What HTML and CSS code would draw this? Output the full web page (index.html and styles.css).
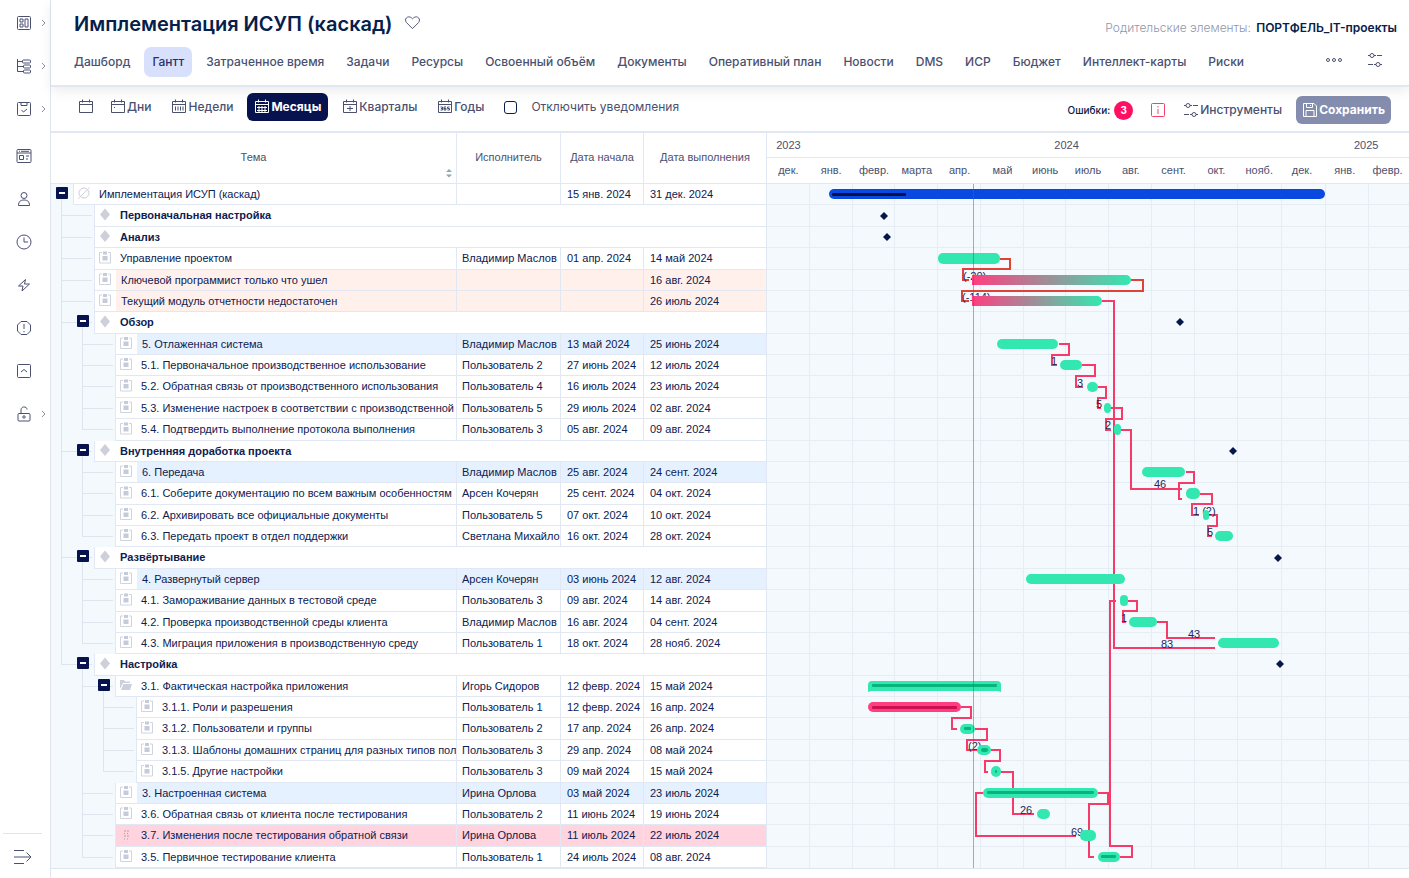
FILE: index.html
```html
<!DOCTYPE html>
<html lang="ru">
<head>
<meta charset="utf-8">
<title>Имплементация ИСУП (каскад)</title>
<link rel="stylesheet" href="styles.css">
</head>
<body>
<svg class="defs" aria-hidden="true">
  <symbol id="chev" viewBox="0 0 6 8"><path d="M1 1l3 3-3 3"/></symbol>
  <symbol id="task" viewBox="0 0 14 14"><path d="M4 2H1.500v10.500h11V2H10" fill="none" stroke="#d0d4e0"/><path d="M5 1h4v3H5zM4.500 5.500h5v4.500h-5z" fill="#c6cbda"/></symbol>
  <symbol id="rhomb" viewBox="0 0 14 14"><path d="M7 1l5 6-5 6-5-6z" fill="#cdd0db"/></symbol>
  <symbol id="none" viewBox="0 0 14 14"><g fill="none" stroke="#cdd0db"><circle cx="7" cy="7" r="5"/><path d="M1.500 12.500l11-11"/></g></symbol>
  <symbol id="folder" viewBox="0 0 14 14"><path d="M1 2h4l1 1.500h5V5H4l-2.500 5H1zM4.500 6H13l-2 6H2z" fill="#cbcfdd"/></symbol>
  <symbol id="drag" viewBox="0 0 14 14"><path d="M5 3h2v1H5zM8 3h2v1H8zM5 5.500h1v1H5zM8 5.500h1v1H8zM5 8h2v1H5zM8 8h2v1H8zM5 11h1v1H5zM8 11h1v1H8z" fill="#b99aae"/></symbol>
  <symbol id="cal" viewBox="0 0 16 16"><path d="M2 2.500h12.500v11h-13v-11zM1.500 5.500h13M4.500 .5v3M11.500 .5v3"/></symbol>
  <symbol id="sliders" viewBox="0 0 16 16"><path d="M1 3.500h2M7 3.500h2M10 3.500h5M1 12.500h5M7 12.500h2M13 12.500h2"/><circle cx="5" cy="3.500" r="2"/><circle cx="11" cy="12.500" r="2"/></symbol>
</svg>

<nav class="side" aria-label="Разделы">
  <a href="#" aria-label="Дашборд"><svg viewBox="0 0 16 16"><rect x="1.500" y="1.500" width="13" height="13" rx="1"/><path d="M4 4h3v3H4zM4 9h3v3H4zM9 4h3v8H9z"/></svg><svg class="chev"><use href="#chev"/></svg></a>
  <a href="#" aria-label="Структура"><svg viewBox="0 0 16 16"><path d="M1.500 1v12.500H7M1.500 3.500H6M1.500 8.500H7"/><rect x="6.500" y="2" width="8" height="3" rx="1"/><rect x="7.500" y="7" width="7" height="3" rx="1"/><rect x="7.500" y="12" width="7" height="3" rx="1"/></svg><svg class="chev"><use href="#chev"/></svg></a>
  <a href="#" aria-label="Задачи"><svg viewBox="0 0 16 16"><rect x="1.500" y="1.500" width="13" height="13" rx="1"/><path d="M5 1.500v3h6v-3M5.500 9l2 2 3.500-3"/></svg><svg class="chev"><use href="#chev"/></svg></a>
  <a href="#" aria-label="Порталы"><svg viewBox="0 0 16 16"><rect x="1" y="1.500" width="14" height="13" rx="1"/><path d="M1 5h14M3.500 7.500h4v4h-4zM10 8h3M10 11h2M3 3.300h1M5 3.300h8"/></svg></a>
  <a href="#" aria-label="Пользователь"><svg viewBox="0 0 16 16"><circle cx="8" cy="4.500" r="3"/><path d="M2.500 14.500c0-4 2-5.500 5.500-5.500s5.500 1.500 5.500 5.500z"/></svg></a>
  <a href="#" aria-label="Время"><svg viewBox="0 0 16 16"><circle cx="8" cy="8" r="7"/><path d="M8 3.500V8h4"/></svg></a>
  <a href="#" aria-label="Автоматизация"><svg viewBox="0 0 16 16"><path d="M9.500 2.500l-7 6.500h4.500l-1 5 7.500-7H8.500z"/></svg></a>
  <a href="#" aria-label="Риски"><svg viewBox="0 0 16 16"><path d="M5 1.500h6L14.500 5v6L11 14.500H5L1.500 11V5zM8 4v5M8 11v1.200"/></svg></a>
  <a href="#" aria-label="Наверх"><svg viewBox="0 0 16 16"><rect x="1.500" y="1.500" width="13" height="13" rx="1"/><path d="M5 9l3-2.500L11 9"/></svg></a>
  <a href="#" aria-label="Доступ"><svg viewBox="0 0 16 16"><rect x="2" y="7.500" width="12" height="7.500" rx="1"/><circle cx="8" cy="11" r="1.200"/><path d="M5 7.500V4c0-4 6-4 6-.5"/></svg><svg class="chev"><use href="#chev"/></svg></a>
  <a href="#" class="out" aria-label="Развернуть"><svg viewBox="0 0 20 16"><path d="M1 1.500h10M1 8h17M1 14.500h10M13.500 3.500L18 8l-4.500 4.500"/></svg></a>
</nav>

<main>
  <header>
    <div class="head">
      <h1>Имплементация ИСУП (каскад)</h1>
      <button class="heart" aria-label="В избранное"><svg viewBox="0 0 18 16"><path d="M9 14.500L2.500 8C-.5 4 4.500-.8 9 4c4.500-4.800 9.500 0 6.500 4z"/></svg></button>
      <p class="parent">Родительские элементы: <a href="#">ПОРТФЕЛЬ_IT-проекты</a></p>
    </div>
    <nav class="tabs" aria-label="Вкладки">
      <a href="#">Дашборд</a><a href="#" class="on">Гантт</a><a href="#">Затраченное время</a><a href="#">Задачи</a><a href="#">Ресурсы</a><a href="#">Освоенный объём</a><a href="#">Документы</a><a href="#">Оперативный план</a><a href="#">Новости</a><a href="#">DMS</a><a href="#">ИСР</a><a href="#">Бюджет</a><a href="#">Интеллект-карты</a><a href="#">Риски</a>
      <button class="more" aria-label="Ещё"><svg viewBox="0 0 16 16"><circle cx="2" cy="8" r="1.500"/><circle cx="8" cy="8" r="1.500"/><circle cx="14" cy="8" r="1.500"/></svg></button>
      <button aria-label="Настройки"><svg viewBox="0 0 16 16"><use href="#sliders"/></svg></button>
    </nav>
  </header>

  <div class="tools">
    <button aria-label="Календарь"><svg><use href="#cal"/></svg></button>
    <button><svg viewBox="0 0 16 16"><use href="#cal"/><path d="M4 8.500h1"/></svg>Дни</button>
    <button><svg viewBox="0 0 16 16"><use href="#cal"/><path d="M4.500 7.500v4M7 7.500v4M9.500 7.500v4M12 7.500v4"/></svg>Недели</button>
    <button class="on"><svg viewBox="0 0 16 16"><use href="#cal"/><path d="M3 8.500h10M3 11.500h10M5 7v6M8 7v6M11 7v6"/></svg>Месяцы</button>
    <button><svg viewBox="0 0 16 16"><use href="#cal"/><path d="M5 9.500h6M8 7v5"/></svg>Кварталы</button>
    <button><svg viewBox="0 0 16 16"><use href="#cal"/><path d="M3.500 8h2v3h-2M4 9.500h1.500M9 8H7v3h2V9.500H7M12.500 8h-2v1.500h2V11h-2"/></svg>Годы</button>
    <label class="mute"><input type="checkbox">Отключить уведомления</label>
    <div class="right">
      <span class="errs">Ошибки: <b>3</b></span>
      <button class="info" aria-label="Информация"><svg viewBox="0 0 16 16"><rect x="1.500" y="1.500" width="13" height="13" rx="1"/><path d="M8 4v1.500M8 7v5"/></svg></button>
      <button><svg viewBox="0 0 16 16"><use href="#sliders"/></svg>Инструменты</button>
      <button class="save"><svg viewBox="0 0 16 16"><path d="M1.500 1.500h10.500l2.500 2.500v10.500h-13zM4.500 1.500v4h6v-4M4 14.500v-6h8v6M8.500 3v1"/></svg>Сохранить</button>
    </div>
  </div>

  <div class="gantt">
    <table class="grid">
      <colgroup><col class="c1"><col class="c2"><col class="c3"><col class="c4"></colgroup>
      <thead><tr><th scope="col">Тема<svg class="sort" viewBox="0 0 8 10"><path d="M1 4l3-3 3 3zM1 6.500l3 3 3-3z"/></svg></th><th scope="col">Исполнитель</th><th scope="col">Дата начала</th><th scope="col">Дата выполнения</th></tr></thead>
      <tbody>
      <tr><td><div class="row"><i class="g d"><button class="tg" aria-label="Свернуть"></button></i><svg class="ic"><use href="#none"/></svg><span class="t">Имплементация ИСУП (каскад)</span></div></td><td></td><td>15 янв. 2024</td><td>31 дек. 2024</td></tr>
      <tr class="ms"><td colspan="4"><div class="row"><i class="g v t"></i><i class="g h"></i><svg class="ic"><use href="#rhomb"/></svg><span class="t">Первоначальная настройка</span></div></td></tr>
      <tr class="ms"><td colspan="4"><div class="row"><i class="g v t"></i><i class="g h"></i><svg class="ic"><use href="#rhomb"/></svg><span class="t">Анализ</span></div></td></tr>
      <tr><td><div class="row"><i class="g v t"></i><i class="g h"></i><svg class="ic"><use href="#task"/></svg><span class="t">Управление проектом</span></div></td><td>Владимир Маслов</td><td>01 апр. 2024</td><td>14 май 2024</td></tr>
      <tr class="warn"><td><div class="row"><i class="g v t"></i><i class="g h"></i><svg class="ic"><use href="#task"/></svg><span class="t">Ключевой программист только что ушел</span></div></td><td></td><td></td><td>16 авг. 2024</td></tr>
      <tr class="warn"><td><div class="row"><i class="g v t"></i><i class="g h"></i><svg class="ic"><use href="#task"/></svg><span class="t">Текущий модуль отчетности недостаточен</span></div></td><td></td><td></td><td>26 июль 2024</td></tr>
      <tr class="ms"><td colspan="4"><div class="row"><i class="g v t"></i><i class="g h d"><button class="tg" aria-label="Свернуть"></button></i><svg class="ic"><use href="#rhomb"/></svg><span class="t">Обзор</span></div></td></tr>
      <tr class="phase"><td><div class="row"><i class="g v"></i><i class="g v t"></i><i class="g h"></i><svg class="ic"><use href="#task"/></svg><span class="t">5. Отлаженная система</span></div></td><td>Владимир Маслов</td><td>13 май 2024</td><td>25 июнь 2024</td></tr>
      <tr><td><div class="row"><i class="g v"></i><i class="g v t"></i><i class="g h"></i><svg class="ic"><use href="#task"/></svg><span class="t">5.1. Первоначальное производственное использование</span></div></td><td>Пользователь 2</td><td>27 июнь 2024</td><td>12 июль 2024</td></tr>
      <tr><td><div class="row"><i class="g v"></i><i class="g v t"></i><i class="g h"></i><svg class="ic"><use href="#task"/></svg><span class="t">5.2. Обратная связь от производственного использования</span></div></td><td>Пользователь 4</td><td>16 июль 2024</td><td>23 июль 2024</td></tr>
      <tr><td><div class="row"><i class="g v"></i><i class="g v t"></i><i class="g h"></i><svg class="ic"><use href="#task"/></svg><span class="t">5.3. Изменение настроек в соответствии с производственной</span></div></td><td>Пользователь 5</td><td>29 июль 2024</td><td>02 авг. 2024</td></tr>
      <tr><td><div class="row"><i class="g v"></i><i class="g l t"></i><i class="g h"></i><svg class="ic"><use href="#task"/></svg><span class="t">5.4. Подтвердить выполнение протокола выполнения</span></div></td><td>Пользователь 3</td><td>05 авг. 2024</td><td>09 авг. 2024</td></tr>
      <tr class="ms"><td colspan="4"><div class="row"><i class="g v t"></i><i class="g h d"><button class="tg" aria-label="Свернуть"></button></i><svg class="ic"><use href="#rhomb"/></svg><span class="t">Внутренняя доработка проекта</span></div></td></tr>
      <tr class="phase"><td><div class="row"><i class="g v"></i><i class="g v t"></i><i class="g h"></i><svg class="ic"><use href="#task"/></svg><span class="t">6. Передача</span></div></td><td>Владимир Маслов</td><td>25 авг. 2024</td><td>24 сент. 2024</td></tr>
      <tr><td><div class="row"><i class="g v"></i><i class="g v t"></i><i class="g h"></i><svg class="ic"><use href="#task"/></svg><span class="t">6.1. Соберите документацию по всем важным особенностям</span></div></td><td>Арсен Кочерян</td><td>25 сент. 2024</td><td>04 окт. 2024</td></tr>
      <tr><td><div class="row"><i class="g v"></i><i class="g v t"></i><i class="g h"></i><svg class="ic"><use href="#task"/></svg><span class="t">6.2. Архивировать все официальные документы</span></div></td><td>Пользователь 5</td><td>07 окт. 2024</td><td>10 окт. 2024</td></tr>
      <tr><td><div class="row"><i class="g v"></i><i class="g l t"></i><i class="g h"></i><svg class="ic"><use href="#task"/></svg><span class="t">6.3. Передать проект в отдел поддержки</span></div></td><td>Светлана Михайло</td><td>16 окт. 2024</td><td>28 окт. 2024</td></tr>
      <tr class="ms"><td colspan="4"><div class="row"><i class="g v t"></i><i class="g h d"><button class="tg" aria-label="Свернуть"></button></i><svg class="ic"><use href="#rhomb"/></svg><span class="t">Развёртывание</span></div></td></tr>
      <tr class="phase"><td><div class="row"><i class="g v"></i><i class="g v t"></i><i class="g h"></i><svg class="ic"><use href="#task"/></svg><span class="t">4. Развернутый сервер</span></div></td><td>Арсен Кочерян</td><td>03 июнь 2024</td><td>12 авг. 2024</td></tr>
      <tr><td><div class="row"><i class="g v"></i><i class="g v t"></i><i class="g h"></i><svg class="ic"><use href="#task"/></svg><span class="t">4.1. Замораживание данных в тестовой среде</span></div></td><td>Пользователь 3</td><td>09 авг. 2024</td><td>14 авг. 2024</td></tr>
      <tr><td><div class="row"><i class="g v"></i><i class="g v t"></i><i class="g h"></i><svg class="ic"><use href="#task"/></svg><span class="t">4.2. Проверка производственной среды клиента</span></div></td><td>Владимир Маслов</td><td>16 авг. 2024</td><td>04 сент. 2024</td></tr>
      <tr><td><div class="row"><i class="g v"></i><i class="g l t"></i><i class="g h"></i><svg class="ic"><use href="#task"/></svg><span class="t">4.3. Миграция приложения в производственную среду</span></div></td><td>Пользователь 1</td><td>18 окт. 2024</td><td>28 нояб. 2024</td></tr>
      <tr class="ms"><td colspan="4"><div class="row"><i class="g l t"></i><i class="g h d"><button class="tg" aria-label="Свернуть"></button></i><svg class="ic"><use href="#rhomb"/></svg><span class="t">Настройка</span></div></td></tr>
      <tr><td><div class="row"><i class="g"></i><i class="g v t"></i><i class="g h d"><button class="tg" aria-label="Свернуть"></button></i><svg class="ic"><use href="#folder"/></svg><span class="t">3.1. Фактическая настройка приложения</span></div></td><td>Игорь Сидоров</td><td>12 февр. 2024</td><td>15 май 2024</td></tr>
      <tr><td><div class="row"><i class="g"></i><i class="g v"></i><i class="g v t"></i><i class="g h"></i><svg class="ic"><use href="#task"/></svg><span class="t">3.1.1. Роли и разрешения</span></div></td><td>Пользователь 1</td><td>12 февр. 2024</td><td>16 апр. 2024</td></tr>
      <tr><td><div class="row"><i class="g"></i><i class="g v"></i><i class="g v t"></i><i class="g h"></i><svg class="ic"><use href="#task"/></svg><span class="t">3.1.2. Пользователи и группы</span></div></td><td>Пользователь 2</td><td>17 апр. 2024</td><td>26 апр. 2024</td></tr>
      <tr><td><div class="row"><i class="g"></i><i class="g v"></i><i class="g v t"></i><i class="g h"></i><svg class="ic"><use href="#task"/></svg><span class="t">3.1.3. Шаблоны домашних страниц для разных типов пол</span></div></td><td>Пользователь 3</td><td>29 апр. 2024</td><td>08 май 2024</td></tr>
      <tr><td><div class="row"><i class="g"></i><i class="g v"></i><i class="g l t"></i><i class="g h"></i><svg class="ic"><use href="#task"/></svg><span class="t">3.1.5. Другие настройки</span></div></td><td>Пользователь 3</td><td>09 май 2024</td><td>15 май 2024</td></tr>
      <tr class="phase"><td><div class="row"><i class="g"></i><i class="g v t"></i><i class="g h"></i><svg class="ic"><use href="#task"/></svg><span class="t">3. Настроенная система</span></div></td><td>Ирина Орлова</td><td>03 май 2024</td><td>23 июль 2024</td></tr>
      <tr><td><div class="row"><i class="g"></i><i class="g v t"></i><i class="g h"></i><svg class="ic"><use href="#task"/></svg><span class="t">3.6. Обратная связь от клиента после тестирования</span></div></td><td>Пользователь 2</td><td>11 июнь 2024</td><td>19 июнь 2024</td></tr>
      <tr class="late"><td><div class="row"><i class="g"></i><i class="g v t"></i><i class="g h"></i><svg class="ic"><use href="#drag"/></svg><span class="t">3.7. Изменения после тестирования обратной связи</span></div></td><td>Ирина Орлова</td><td>11 июль 2024</td><td>22 июль 2024</td></tr>
      <tr><td><div class="row"><i class="g"></i><i class="g l t"></i><i class="g h"></i><svg class="ic"><use href="#task"/></svg><span class="t">3.5. Первичное тестирование клиента</span></div></td><td>Пользователь 1</td><td>24 июль 2024</td><td>08 авг. 2024</td></tr>
      </tbody>
    </table>

    <section class="chart" aria-label="Диаграмма Гантта">
      <div class="years"><span>2023</span><span>2024</span><span>2025</span></div>
      <div class="months"><span>дек.</span><span>янв.</span><span>февр.</span><span>марта</span><span>апр.</span><span>май</span><span>июнь</span><span>июль</span><span>авг.</span><span>сент.</span><span>окт.</span><span>нояб.</span><span>дек.</span><span>янв.</span><span>февр.</span></div>
      <svg class="canvas" viewBox="767 184 642 684">
        <defs>
          <linearGradient id="risk"><stop offset="0" stop-color="#ff3e80"/><stop offset="1" stop-color="#33e8b0"/></linearGradient>
          <path id="dm" d="M0-4l4 4-4 4-4-4z"/>
        </defs>
        <path class="lines" d="M809.500 184v684M852.500 184v684M894.500 184v684M937.500 184v684M980.500 184v684M1023.500 184v684M1065.500 184v684M1108.500 184v684M1151.500 184v684M1194.500 184v684M1237.500 184v684M1281.500 184v684M1325.500 184v684M1368.500 184v684M767 204.500h642M767 226.500h642M767 247.500h642M767 269.500h642M767 290.500h642M767 311.500h642M767 333.500h642M767 354.500h642M767 375.500h642M767 397.500h642M767 418.500h642M767 440.500h642M767 461.500h642M767 482.500h642M767 504.500h642M767 525.500h642M767 546.500h642M767 568.500h642M767 589.500h642M767 611.500h642M767 632.500h642M767 653.500h642M767 675.500h642M767 696.500h642M767 717.500h642M767 739.500h642M767 760.500h642M767 782.500h642M767 803.500h642M767 824.500h642M767 846.500h642"/>
        <path class="link red" d="M1000 259h10v10H963v11h6M1131 280h12v11H962v10h7"/>
        <path class="link" d="M1102 301h12v347h101M1059 344h10v11h-17v10h5M1082 365h13v11h-19v11h7M1098 387h8v11h-8v10h3M1111 408h11v11h-16v11h5M1121 430h10v59h51M1186 472h8v11h-15v16h3M1200 494h12v10h-20v11h7M1209 515h8v11h-9v10h4M1128 601h9v10h-14v11h3M1157 622h10v16h48M1120 857h12v-11h-22V601h6M961 707h10v11h-19v11h5M975 729h12v11h-20v10h10M991 750h9v11h-15v11h3M1001 772h12v42h21M983 793h-7v43h100M1098 793h10v11h-19v53h5"/>
        <g class="lag"><text x="963" y="280">(-20)</text><text x="962" y="301">(-114)</text><text x="1051" y="365">1</text><text x="1077" y="387">3</text><text x="1096" y="408">5</text><text x="1105" y="429">2</text><text x="1154" y="488">46</text><text x="1193" y="515">1 (2)</text><text x="1207" y="536">5</text><text x="1121" y="622">1</text><text x="1188" y="638">43</text><text x="1161" y="648">83</text><text x="968" y="750">(2)</text><text x="1020" y="814">26</text><text x="1071" y="836">69</text></g>
        <rect class="sum" x="829" y="189" width="496" height="10" rx="5"/><rect x="832" y="193" width="74" height="3" rx="1" fill="#071049"/>
        <g class="bar">
          <rect x="938" y="253" width="62" height="11" rx="5"/>
          <rect x="997" y="339" width="61" height="10" rx="5"/><rect x="1060" y="360" width="22" height="10" rx="5"/><rect x="1087" y="382" width="11" height="10" rx="5"/><rect x="1104" y="403" width="7" height="10" rx="4"/><rect x="1114" y="424" width="7" height="11" rx="4"/>
          <rect x="1142" y="467" width="43" height="10" rx="5"/><rect x="1186" y="488" width="14" height="11" rx="5"/><rect x="1203" y="510" width="6" height="10" rx="3"/><rect x="1215" y="531" width="18" height="10" rx="5"/>
          <rect x="1026" y="574" width="99" height="10" rx="5"/><rect x="1120" y="595" width="8" height="11" rx="4"/><rect x="1129" y="617" width="28" height="10" rx="5"/><rect x="1218" y="638" width="61" height="10" rx="5"/>
          <path d="M868 692v-7q0-4 4-4h125q4 0 4 4v7l-3-1H871z"/>
          <rect x="960" y="724" width="15" height="10" rx="5"/><rect x="977" y="745" width="14" height="10" rx="5"/><rect x="991" y="766" width="10" height="11" rx="5"/><rect x="983" y="788" width="115" height="10" rx="5"/><rect x="1037" y="809" width="13" height="10" rx="5"/><rect x="1080" y="830" width="16" height="11" rx="5"/><rect x="1098" y="852" width="22" height="10" rx="5"/>
        </g>
        <path d="M972 275h154a5 5 0 0 1 0 10H972z" fill="url(#risk)"/><path d="M972 296h125a5 5 0 0 1 0 10H972z" fill="url(#risk)"/>
        <rect x="868" y="702" width="93" height="10" rx="5" fill="#ff3e80"/><rect x="872" y="706" width="85" height="3" rx="1" fill="#cc0f50"/>
        <g fill="#06b57c"><rect x="872" y="684" width="125" height="3" rx="1"/><rect x="964" y="727" width="7" height="3" rx="1"/><rect x="981" y="748" width="7" height="4" rx="2"/><rect x="995" y="770" width="2" height="3" rx="1"/><rect x="987" y="791" width="107" height="3" rx="1"/><rect x="1101" y="855" width="15" height="3" rx="1"/></g>
        <g fill="#06184a"><use href="#dm" x="884" y="216"/><use href="#dm" x="887" y="237"/><use href="#dm" x="1180" y="322"/><use href="#dm" x="1233" y="451"/><use href="#dm" x="1278" y="558"/><use href="#dm" x="1280" y="664"/></g>
        <path class="today" d="M973.500 184v684"/>
      </svg>
    </section>
  </div>
</main>
</body>
</html>
```
FILE: styles.css
```css
* { box-sizing: border-box; }
:root { --navy: #0e2050; --ink: #4a5070; --line: #e2e8f3; --pane: #f4f9fe; --table-font: "Liberation Sans", Arial, sans-serif; }
body { margin: 0; min-height: 100vh; display: flex; font: 12px/16px Inter, "Liberation Sans", sans-serif; color: var(--ink); background: #fff; }
a { color: inherit; text-decoration: none; }
button { font: inherit; color: inherit; background: none; border: 0; padding: 0; margin: 0; }
svg { display: block; fill: none; stroke: currentColor; }
.defs { position: absolute; width: 0; height: 0; }

.side { flex: none; width: 51px; border-right: 1px solid #dfe6f2; display: flex; flex-direction: column; padding: 15px 0 14px 16px; gap: 27px; }
.side a { display: flex; align-items: center; gap: 9px; height: 16px; }
.side a svg { width: 16px; height: 16px; }
.side a:nth-child(4) { margin-top: 4px; }
.side a .chev { width: 6px; height: 8px; color: #8a90a6; }
.side .out { margin: auto 8px 0 -13px; padding: 16px 0 0 10px; height: 31px; border-top: 1px solid #dce4f1; }
.side .out svg { width: 20px; }

main { flex: 1; min-width: 0; }
header { position: relative; padding: 10px 12px 8px 23px; border-bottom: 2px solid var(--line); box-shadow: 0 4px 12px rgba(0, 0, 0, .08); }
.head { display: flex; align-items: center; height: 28px; }
h1 { margin: 0; font-size: 20px; line-height: 28px; font-weight: 600; color: #06204b; }
.heart { margin: 0 0 4px 11px; }
.heart svg { width: 17px; height: 15px; }
.parent { margin: 8px 0 0 auto; font-weight: 300; color: #8f97ae; }
.parent a { margin-left: 2px; font-weight: 600; color: #06204b; }
.tabs { display: flex; align-items: center; gap: 6px; margin: 9px 0 0 -8px; font-weight: 500; }
.tabs a { padding: 7px 8px; border-radius: 7px; white-space: nowrap; }
.tabs .on { background: #d9e0fb; color: #2b3169; }
.tabs svg { width: 16px; height: 16px; }
.tabs button { padding-bottom: 5px; }
.tabs .more { margin: 0 24px 0 auto; transform: none; }
.tabs .more { margin-right: 19px; }
.tabs button:last-child { margin-right: 14px; }

.tools { display: flex; align-items: center; height: 46px; padding: 0 18px 4px 23px; border-bottom: 2px solid var(--line); font-weight: 500; }
.tools button { display: flex; align-items: center; gap: 1px; height: 28px; margin-right: 20px; }
.tools svg { width: 16px; height: 16px; }
.tools button:first-child { margin: 0 16px 0 4px; }
.tools .on { background: #07134f; color: #fff; font-weight: 700; border-radius: 6px; padding: 0 7px; margin: 0 14px 0 -6px; }
.mute { display: flex; align-items: center; gap: 14px; font-weight: 400; }
.mute input { appearance: none; width: 13px; height: 13px; margin: 0; border: 1px solid #06204b; border-radius: 3px; }
.right { display: flex; align-items: center; margin: 6px 0 0 auto; }
.errs { display: flex; align-items: center; gap: 4px; font-size: 10px; color: #06204b; margin-right: 17px; }
.errs b { width: 19px; height: 19px; border-radius: 50%; background: #ff0f62; color: #fff; text-align: center; line-height: 19px; }
.right .info { color: #f5416c; }
.tools .right button { margin: 0; }
.tools .right .info { margin-right: 17px; }
.tools .right .save { margin-left: 14px; background: #858dae; color: #fff; font-weight: 700; border-radius: 6px; padding: 0 6px; }

.gantt { display: flex; border-bottom: 1px solid #dfe6f2; }
.grid { flex: none; width: 716px; table-layout: fixed; border-collapse: separate; border-spacing: 0; font-family: var(--table-font); font-size: 11px; line-height: 14px; color: var(--navy); background: #fff; }
.c1 { width: 406px; } .c2 { width: 104px; } .c3 { width: 83px; } .c4 { width: 123px; }
th { position: relative; height: 51px; padding: 0 0 3px; font-weight: 400; color: var(--ink); border-right: 1px solid var(--line); border-bottom: 1px solid var(--line); }
.sort { position: absolute; right: 3px; bottom: 5px; width: 8px; height: 10px; fill: #8fa6b2; stroke: none; }
tr { --h: 21px; }
tbody tr:nth-child(8n+2), tbody tr:nth-child(8n+4), tbody tr:nth-child(8n+7) { --h: 22px; }
td { height: var(--h); padding: 0 0 1px 5px; white-space: nowrap; overflow: hidden; border-right: 1px solid var(--line); border-bottom: 1px solid var(--line); }
td:nth-child(3), td:nth-child(4) { padding-left: 6px; }
td:first-child { padding: 0 0 0 1px; background: var(--pane); border-bottom: 0; }
.row { display: flex; height: var(--h); }
.g { flex: none; position: relative; width: 21px; --c: #dfe5ee; }
.g::before, .g::after { position: absolute; background: var(--c); }
.v::before { content: ""; left: 9px; top: 0; bottom: 0; width: 1px; }
.l::before { content: ""; left: 9px; top: 0; height: 10px; width: 1px; }
.d::before { content: ""; left: 9px; top: 10px; bottom: 0; width: 1px; }
.g.t::after { content: ""; left: 9px; right: 0; top: 10px; height: 1px; }
.g.h::after { content: ""; left: 0; right: 2px; top: 10px; height: 1px; }
.tg { position: absolute; z-index: 1; left: 4px; top: 3px; width: 12px; height: 12px; border-radius: 1px; background: linear-gradient(#fff, #fff) center / 6px 2px no-repeat #07134f; }
.ic { flex: none; width: 22px; height: auto; padding: 2px 4px 4px 3px; background: #fff; border: solid var(--line); border-width: 0 0 1px 1px; stroke: none; }
span.t { flex: 1; overflow: hidden; padding: 3px 0 0 4px; background: #fff; border-bottom: 1px solid var(--line); }
.ms { font-weight: 600; }
.warn td:not(:first-child), .warn span.t { background: #fff0ec; }
.phase td:not(:first-child), .phase span.t { background: #e5f1ff; }
.warn span.t, .phase span.t { padding-left: 5px; }
.late td:not(:first-child), .late span.t, .late .ic { background: #ffd4df; }

.chart { flex: 1; min-width: 0; overflow: hidden; background: var(--pane); font-family: var(--table-font); font-size: 11px; }
.years, .months { display: grid; background: #fff; text-align: center; border-bottom: 1px solid var(--line); }
.years { grid-template-columns: 1fr 12fr 2fr; height: 25px; line-height: 25px; }
.months { grid-template-columns: repeat(15, 1fr); height: 26px; line-height: 25px; }
.canvas { width: 100%; stroke: none; }
.lines { stroke: #e6edf5; }
.link { stroke: #f73b68; stroke-width: 2; }
.link.red { stroke: #df4337; }
.lag { fill: #1b2a57; }
.sum { fill: #0a49e0; }
.bar { fill: #33e8b0; }
.today { stroke: #e8202c; stroke-opacity: .5; }
```
